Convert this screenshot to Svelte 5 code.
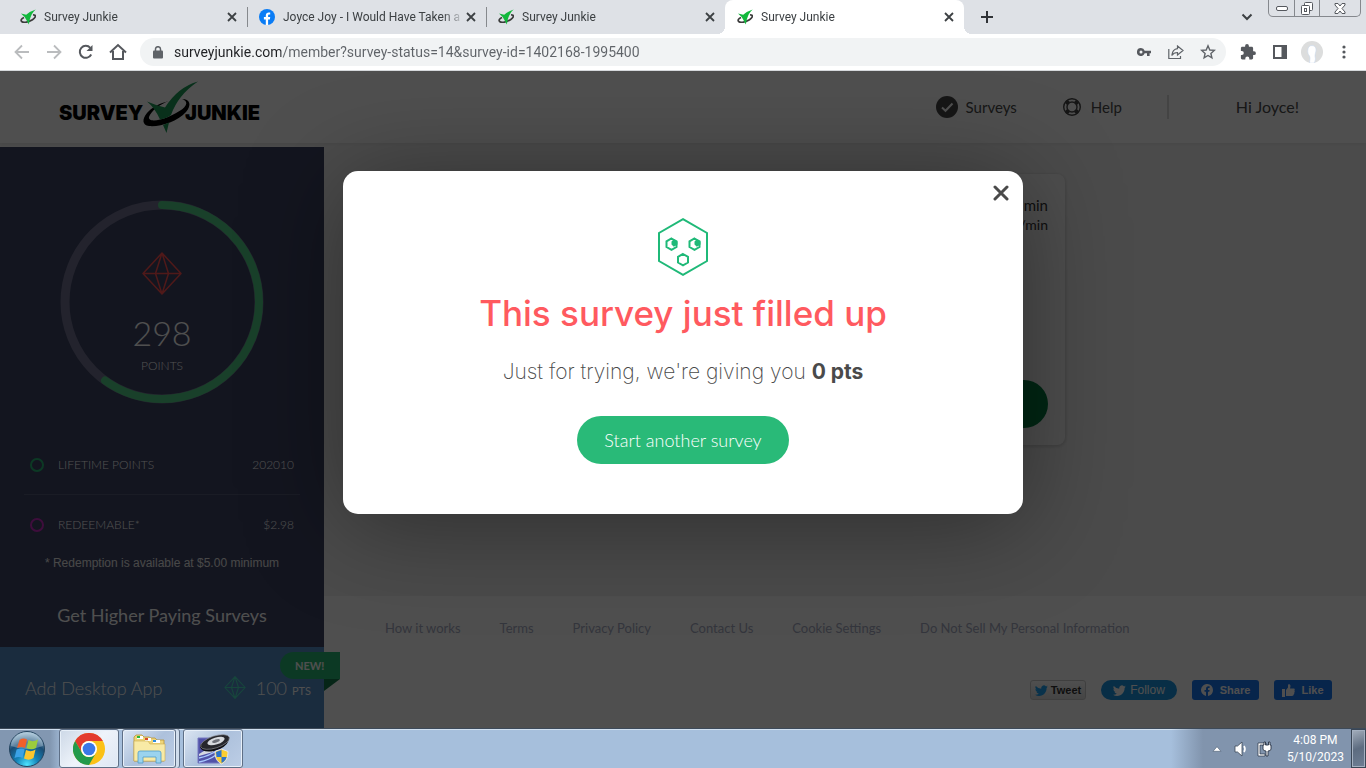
<script lang="ts">
  type Tab = { title: string; icon: 'sj' | 'fb'; active?: boolean };

  const tabs: Tab[] = [
    { title: 'Survey Junkie', icon: 'sj' },
    { title: 'Joyce Joy - I Would Have Taken a', icon: 'fb' },
    { title: 'Survey Junkie', icon: 'sj' },
    { title: 'Survey Junkie', icon: 'sj', active: true }
  ];

  const footerLinks = [
    'How it works',
    'Terms',
    'Privacy Policy',
    'Contact Us',
    'Cookie Settings',
    'Do Not Sell My Personal Information'
  ];

  const stats = [
    { label: 'LIFETIME POINTS', value: '202010', color: '#28b976' },
    { label: 'REDEEMABLE*', value: '$2.98', color: '#c82cc0' }
  ];

  const points = 298;
  const progress = 60;

  let url = $state('surveyjunkie.com/member?survey-status=14&survey-id=1402168-1995400');
  let modalOpen = $state(true);
</script>

{#snippet gem()}
  <svg class="gem" viewBox="0 0 40 43" fill="none" stroke="currentColor" stroke-width="1.5" stroke-linejoin="round">
    <path d="M20 1 39 21.500 20 42 1 21.500Z M1 21.500H39 M20 1 13.500 21.500 20 42 26.500 21.500Z" />
  </svg>
{/snippet}

{#snippet bird()}
  <svg class="bird" viewBox="0 0 24 20" fill="currentColor">
    <path d="M23.600 2.800a9.700 9.700 0 0 1-2.800.8A4.900 4.900 0 0 0 23 .9a9.800 9.800 0 0 1-3.100 1.200 4.900 4.900 0 0 0-8.300 4.500A13.900 13.900 0 0 1 1.500 1.500a4.900 4.900 0 0 0 1.500 6.500A4.900 4.900 0 0 1 .8 7.400a4.900 4.900 0 0 0 3.900 4.900 4.900 4.900 0 0 1-2.200.1 4.900 4.900 0 0 0 4.600 3.400A9.800 9.800 0 0 1 0 17.800 13.900 13.900 0 0 0 7.500 20c9 0 14.200-7.600 13.900-14.700a10 10 0 0 0 2.200-2.500z" />
  </svg>
{/snippet}

<div class="screen">
  <header class="browser">
    <div class="tabstrip">
      {#each tabs as tab}
        <div class="tab" class:active={tab.active}>
          {#if tab.icon === 'fb'}
            <svg class="favicon" viewBox="0 0 16 16">
              <circle cx="8" cy="8" r="8" fill="#0a7cf5" />
              <path d="M6.800 16V10.500H4.900V8.100h1.900V6.500c0-2 1.200-3 2.900-3 .8 0 1.500.1 1.500.1v1.900h-.9c-.9 0-1.200.6-1.200 1.200v1.400h2.100l-.3 2.400H9.100V16z" fill="#fff" />
            </svg>
          {:else}
            <svg class="favicon" viewBox="0 0 16 16">
              <path d="M13 6C16.500 5.600 16 8.500 12.500 10.800 9 13 3.500 14 1.600 12.500 .5 11.300 1.500 9.500 4 8.500" fill="none" stroke="#3b3b3b" stroke-width="1.700" />
              <path d="M1 4.500 6.200 5.800Q9.500 2.500 15.700.5 11.500 4 9.800 10.500L8.800 15.500 7 12Q4.500 7 1 4.500Z" fill="#12b83c" />
            </svg>
          {/if}
          <span class="tab-title">{tab.title}</span>
          <button class="tab-close" aria-label="Close tab">
            <svg width="10" height="10" viewBox="0 0 10 10"><path d="M1 1 9 9M9 1 1 9" stroke="#3c4043" stroke-width="1.800" /></svg>
          </button>
        </div>
      {/each}
      <button class="new-tab" aria-label="New tab">
        <svg width="12" height="12" viewBox="0 0 12 12"><path d="M6 0V12M0 6H12" stroke="#303337" stroke-width="2" /></svg>
      </button>
      <button class="tab-search" aria-label="Search tabs">
        <svg width="12" height="8" viewBox="0 0 12 8"><path d="M1.500 1.500 6 6 10.500 1.500" fill="none" stroke="#3c4043" stroke-width="2" /></svg>
      </button>
      <div class="window-controls">
        <button aria-label="Minimize">
          <svg width="12" height="5" viewBox="0 0 12 5"><rect x=".5" y=".5" width="11" height="4" rx="1.500" fill="#fff" stroke="#55585e" /></svg>
        </button>
        <button aria-label="Restore">
          <svg width="14" height="13" viewBox="0 0 14 13" fill="#fff" stroke="#55585e"><rect x="4.500" y=".5" width="8" height="8" rx="1" /><rect x="1.500" y="3.500" width="8" height="9" rx="1" /><rect x="4.500" y="6.500" width="2" height="3" /></svg>
        </button>
        <button class="win-close" aria-label="Close">
          <svg width="12" height="11" viewBox="0 0 12 11"><path d="M1 .5H4L6 3 8 .5H11V2L8 5.500 11 9V10.500H8L6 8 4 10.500H1V9L4 5.500 1 2Z" fill="#fff" stroke="#55585e" /></svg>
        </button>
      </div>
    </div>

    <div class="toolbar">
      <button class="tool" aria-label="Back">
        <svg width="16" height="16" viewBox="0 0 16 16" fill="none" stroke="#babcbe" stroke-width="1.800"><path d="M15 8H2M8 1.500 1.500 8 8 14.500" /></svg>
      </button>
      <button class="tool" aria-label="Forward">
        <svg width="16" height="16" viewBox="0 0 16 16" fill="none" stroke="#babcbe" stroke-width="1.800"><path d="M1 8H14M8 1.500 14.500 8 8 14.500" /></svg>
      </button>
      <button class="tool" aria-label="Reload">
        <svg width="16" height="16" viewBox="0 0 16 16"><path d="M13.200 10.500A6 6 0 1 1 12.300 3.800" fill="none" stroke="#55585d" stroke-width="2" /><path d="M14.500 1V7H8.500Z" fill="#55585d" /></svg>
      </button>
      <button class="tool" aria-label="Home">
        <svg width="18" height="18" viewBox="0 0 18 18" fill="none" stroke="#55585d" stroke-width="2"><path d="M1 9.500 9 2 17 9.500M4 8V16H14V8" /></svg>
      </button>
      <div class="omnibox">
        <svg class="lock" width="10" height="13" viewBox="0 0 10 13"><rect x="0" y="4.500" width="10" height="8" rx="1" fill="#5f6368" /><path d="M2.500 5V3a2.500 2.300 0 0 1 5 0V5" fill="none" stroke="#5f6368" stroke-width="1.500" /></svg>
        <input class="url" type="text" aria-label="Address" bind:value={url} />
        <button class="tool" aria-label="Passwords">
          <svg width="14" height="8" viewBox="0 0 14 8"><path d="M4 0a4 4 0 1 0 3.700 5.300H10V8h2.600V5.300H14V2.700H7.700A4 4 0 0 0 4 0Zm0 2.500a1.500 1.500 0 1 1 0 3 1.500 1.500 0 0 1 0-3Z" fill="#55585d" fill-rule="evenodd" /></svg>
        </button>
        <button class="tool" aria-label="Share">
          <svg width="16" height="15" viewBox="0 0 16 15" fill="none" stroke="#5f6368" stroke-width="1.200"><path d="M.8 4V13.500H12.500V11M9.500 1 15 5.500 9.500 10V7.500C6.500 7.500 5 8.500 3.800 10.500 4.200 6.500 6 4 9.500 3.600Z" /></svg>
        </button>
        <button class="tool" aria-label="Bookmark">
          <svg width="16" height="16" viewBox="0 0 16 16" fill="none" stroke="#5f6368" stroke-width="1.400"><path d="M8 1.800 9.800 6 14.300 6.400 10.900 9.400 11.900 13.900 8 11.500 4.100 13.900 5.100 9.400 1.700 6.400 6.200 6Z" /></svg>
        </button>
      </div>
      <button class="tool" aria-label="Extensions">
        <svg width="16" height="16" viewBox="0 0 16 16"><path d="M14 7.300h-.9V4.200c0-.8-.6-1.400-1.400-1.400H8.900V2a1.900 1.900 0 1 0-3.800 0v.8H2.300c-.8 0-1.400.6-1.400 1.400V7h.9a2 2 0 0 1 0 4H.9v3c0 .8.600 1.400 1.400 1.400h3v-.8a2 2 0 0 1 4 0v.8h2.400c.8 0 1.400-.6 1.400-1.400v-2.900h.9a1.900 1.900 0 1 0 0-3.800z" fill="#55585d" /></svg>
      </button>
      <button class="tool" aria-label="Side panel">
        <svg width="14" height="14" viewBox="0 0 14 14"><path d="M0 0H14V14H0ZM2 2V12H8.500V2Z" fill="#55585d" fill-rule="evenodd" /></svg>
      </button>
      <button class="tool" aria-label="Profile">
        <svg width="22" height="22" viewBox="0 0 22 22"><circle cx="11" cy="11" r="11" fill="#dcdddd" /><path d="M11 4.500c3 0 4.500 2.500 4 5.500-.3 2-1 3-1 5l.5 3-1 4a11 11 0 0 1-5 0l.5-5-.5-2c-1.500-1.500-2-4-1.700-6C7 6 8.500 4.500 11 4.500Z" fill="#fff" stroke="#c9d8ec" stroke-width=".6" /></svg>
      </button>
      <button class="tool" aria-label="Menu">
        <svg width="4" height="14" viewBox="0 0 4 14" fill="#55585d"><circle cx="2" cy="2" r="1.600" /><circle cx="2" cy="7" r="1.600" /><circle cx="2" cy="12" r="1.600" /></svg>
      </button>
    </div>
  </header>

  <div class="page">
    <div class="site-header">
      <a class="logo" href="#home" aria-label="Survey Junkie">
        <svg width="204" height="56" viewBox="0 0 204 56">
          <g class="logo-text">
            <text x="2" y="41">SURVEY</text>
            <text x="128" y="41">JUNKIE</text>
          </g>
          <path d="M125 20C133 20 135 26 129 33 120 43 103 48 92 47 85 46 85 40 90 34 94 29 103 24 112 22 103 25 94 32 92 38 91 43 101 42 111 38 123 33 131 27 129 23 128 21 127 21 125 20Z" />
          <path d="M90 22.500Q98 26 108 28.500 121 8 141 2.500 121 16 114 36 110 39 103 40.500 98 29 90 22.500ZM106 46 112 43.500 109.500 54Z" fill="#1d9c58" />
        </svg>
      </a>
      <nav class="site-nav">
        <a class="surveys" href="#surveys">
          <svg width="22" height="22" viewBox="0 0 22 22"><circle cx="11" cy="11" r="11" fill="#494949" /><path d="M6 11.500 9.500 14.800 16.500 7.500" fill="none" stroke="#fff" stroke-width="2" /></svg>
          Surveys
        </a>
        <a class="help" href="#help">
          <svg width="18" height="18" viewBox="0 0 18 18" fill="none" stroke="#494949"><circle cx="9" cy="9" r="8.300" stroke-width="1.400" /><circle cx="9" cy="9" r="5" stroke-width="1.400" /><path d="M3 3 5.500 5.500M15 3 12.500 5.500M3 15 5.500 12.500M15 15 12.500 12.500" stroke-width="4" /></svg>
          Help
        </a>
        <span class="greeting">Hi Joyce!</span>
      </nav>
    </div>

    <div class="site-body">
      <aside class="sidebar">
        <div class="ring">
          <svg class="ring-track" viewBox="0 0 204 204" fill="none">
            <circle cx="102" cy="102" r="97" stroke="#717190" stroke-width="9" />
            <circle cx="102" cy="102" r="97" stroke="#53ce87" stroke-width="8" stroke-linecap="round" pathLength="100" stroke-dasharray="{progress} 100" transform="rotate(-90 102 102)" />
          </svg>
          <div class="ring-content">
            {@render gem()}
            <span class="ring-value">{points}</span>
            <span class="ring-label">POINTS</span>
          </div>
        </div>

        <ul class="stats">
          {#each stats as stat}
            <li>
              <span class="dot" style="border-color: {stat.color}"></span>
              <span class="stat-label">{stat.label}</span>
              <span>{stat.value}</span>
            </li>
          {/each}
        </ul>
        <p class="note">* Redemption is available at $5.00 minimum</p>
        <a class="higher" href="#profile">Get Higher Paying Surveys</a>

        <a class="desktop-app" href="#desktop">
          <span class="desktop-title">Add Desktop App</span>
          {@render gem()}
          <span class="desktop-points">100 <small>PTS</small></span>
          <span class="badge">NEW!</span>
        </a>
      </aside>

      <div class="main">
        <div class="content">
          <div class="survey-card">
            <div class="rate">
              <div>min</div>
              <div class="per-minute">/min</div>
            </div>
            <button class="start" aria-label="Start survey"></button>
          </div>
        </div>
        <footer class="site-footer">
          <nav class="footer-links">
            {#each footerLinks as link}
              <a href="#footer">{link}</a>
            {/each}
          </nav>
          <div class="social">
            <button class="tweet">{@render bird()}Tweet</button>
            <button class="follow">{@render bird()}Follow</button>
            <button class="facebook share">
              <svg width="12" height="12" viewBox="0 0 12 12"><path d="M12 6A6 6 0 1 0 5 11.900V7.800H3.500V6H5V4.700C5 3.200 5.900 2.300 7.300 2.300c.6 0 1.300.1 1.300.1v1.500h-.8C7.100 3.900 7 4.300 7 4.800V6h1.600l-.3 1.800H7v4.100A6 6 0 0 0 12 6Z" fill="#fff" /></svg>
              Share
            </button>
            <button class="facebook">
              <svg width="13" height="13" viewBox="0 0 13 13" fill="#fff"><path d="M0 5H3V13H0ZM4 12V6L6 3.500V1C6 0 8.500-.3 8.500 2L8 4.500H11.500C13 4.500 13 6 12.400 6.500 13 7.300 12.700 8.300 12.200 8.600 12.500 9.500 12.200 10 11.600 10.400 11.700 11.600 11 12 10 12Z" /></svg>
              Like
            </button>
          </div>
        </footer>
      </div>
    </div>

    {#if modalOpen}
      <div class="overlay">
        <div class="modal" role="dialog" aria-modal="true" aria-labelledby="modal-title">
          <button class="modal-close" aria-label="Close" onclick={() => (modalOpen = false)}>
            <svg width="16" height="16" viewBox="0 0 16 16"><path d="M2 2 14 14M14 2 2 14" stroke="#4a4a4a" stroke-width="3" stroke-linecap="round" /></svg>
          </button>
          <svg class="face" width="52" height="58" viewBox="0 0 52 58" fill="none" stroke="#1fb978" stroke-width="2">
            <path d="M26 1.200 50 15V43L26 56.800 2 43V15Z" />
            <path d="M14.500 20.500 19.500 23.300V29L14.500 31.800 9.500 29V23.300ZM37.500 20.500 42.500 23.300V29L37.500 31.800 32.500 29V23.300ZM26 36 31 38.800V44.500L26 47.300 21 44.500V38.800Z" />
            <path d="M17 22.500 19.500 24V26L17 27.500 15.500 26V24ZM40 22.500 42.500 24V26L40 27.500 38.500 26V24Z" fill="#1fb978" />
          </svg>
          <h1 id="modal-title">This survey just filled up</h1>
          <p>Just for trying, we're giving you <strong>0 pts</strong></p>
          <button class="another">Start another survey</button>
        </div>
      </div>
    {/if}
  </div>

  <div class="taskbar">
    <button class="start-orb" aria-label="Start">
      <svg width="38" height="38" viewBox="0 0 38 38">
        <defs>
          <radialGradient id="orb" cx=".5" cy=".95" r=".9">
            <stop offset="0" stop-color="#4fe4ff" />
            <stop offset=".35" stop-color="#1483b8" />
            <stop offset=".7" stop-color="#1a4c74" />
            <stop offset="1" stop-color="#8fb3cc" />
          </radialGradient>
        </defs>
        <circle cx="19" cy="19" r="17.500" fill="url(#orb)" stroke="#24445f" />
        <path d="M3 16A16 14 0 0 1 35 16Q19 22 3 16Z" fill="#fff" opacity=".28" />
        <path d="M11.500 10Q15 7.500 19 9.500L17 18Q13.500 16 9 18Z" fill="#f0602a" />
        <path d="M20.500 10Q25 12.500 30 9.500L28 18Q23.500 20.500 18.500 18Z" fill="#9ccc3c" />
        <path d="M8.600 19.500Q13 17.500 16.700 19.500L14.500 28Q11 26 6.500 28Z" fill="#3ba2e6" />
        <path d="M18 20Q23 22.500 27.500 19.500L25.500 28Q21 31 16 28.500Z" fill="#fcc62e" />
      </svg>
    </button>
    <button class="task current" aria-label="Google Chrome">
      <svg width="32" height="32" viewBox="0 0 32 32">
        <circle cx="16" cy="16" r="16" fill="#fbc116" />
        <path d="M2.140 8A16 16 0 0 1 29.860 8H16A8 8 0 0 0 9.070 20Z" fill="#e33b2e" />
        <path d="M2.140 8A16 16 0 0 0 16 32L22.930 20A8 8 0 0 1 9.070 20Z" fill="#229a4b" />
        <circle cx="16" cy="16" r="8" fill="#fff" />
        <circle cx="16" cy="16" r="6.300" fill="#3b78e7" />
      </svg>
    </button>
    <button class="task stacked" aria-label="File Explorer">
      <svg width="34" height="32" viewBox="0 0 34 32">
        <path d="M2 4 4 2H10L12 4H17L19 5H23L25 7H32V28H2Z" fill="#eed57a" stroke="#b8963a" stroke-width=".8" />
        <path d="M5 3H11V6H5ZM13 5H19V8H13ZM21 7H28V10H21Z" fill="#fff" />
        <path d="M5 3H8V5H5Z" fill="#28b83c" />
        <path d="M13 5H16V7H13Z" fill="#d84a2a" />
        <path d="M21 7H24V9H21Z" fill="#2d8ee0" />
        <path d="M2 8H16L18 11H33V28H2Z" fill="#f8eaa6" stroke="#cbac50" stroke-width=".6" />
        <path d="M6 20Q6 18 8 18H27Q29 18 29 20V30H24V24H11V30H6Z" fill="#9bd3ee" stroke="#4f9cc6" stroke-width=".8" />
      </svg>
    </button>
    <button class="task installer" aria-label="Installer">
      <svg width="34" height="32" viewBox="0 0 34 32">
        <path d="M2 5H25V30H2Z" fill="#5152a8" stroke="#7678c0" />
        <path d="M3 25Q13 23 22 17M3 29Q13 27 20 22" fill="none" stroke="#a8c9ff" stroke-width="1.500" />
        <path d="M3 21 13 15 21 13 17 19 3 23Z" fill="#d5d9e2" />
        <path d="M4 11Q6 18 18 15 30 12 33 4L33 7Q30 15 18 18 6 20 4 14Z" fill="#101114" />
        <ellipse cx="19" cy="9" rx="15" ry="6" transform="rotate(-18 19 9)" fill="#26272c" stroke="#8e9096" stroke-width=".6" />
        <ellipse cx="20" cy="8" rx="9" ry="3.500" transform="rotate(-18 20 8)" fill="#d6d9dd" />
        <ellipse cx="20" cy="8" rx="4" ry="1.500" transform="rotate(-18 20 8)" fill="#6d7078" />
        <path d="M19 18.500 25.500 16 32 18.500C32 25 30 28.500 25.500 31 21 28.500 19 25 19 18.500Z" fill="#f9cd32" stroke="#dfe6f0" />
        <path d="M20 19 25.500 17V24H20.600ZM25.500 24H30.600Q29.500 28 25.500 30Z" fill="#2b73cc" />
      </svg>
    </button>
    <div class="tray">
      <svg width="10" height="6" viewBox="0 0 10 6"><path d="M5 .7 9 5.300H1Z" fill="#fff" stroke="#4a5a70" stroke-width=".6" /></svg>
      <svg width="16" height="16" viewBox="0 0 16 16"><path d="M2 5H4.500L9 1V15L4.500 11H2Z" fill="#fff" stroke="#3b4655" stroke-width=".8" /><path d="M11 5Q13 8 11 11" fill="none" stroke="#fff" stroke-width="1.600" /></svg>
      <svg width="16" height="16" viewBox="0 0 16 16"><path d="M1 2H9V4H3V13H8V15H1Z" fill="#fff" stroke="#273243" stroke-width=".7" /><path d="M7 1V4H6V8Q6 10 9 10V15H11V10Q14 10 14 8V4H13V1H11.500V4H8.500V1Z" fill="#fff" stroke="#273243" stroke-width=".9" /></svg>
      <div class="clock">
        <div>4:08 PM</div>
        <div>5/10/2023</div>
      </div>
    </div>
    <button class="show-desktop" aria-label="Show desktop"></button>
  </div>
</div>

<style>
  :global(body) {
    margin: 0;
  }
  .screen {
    display: flex;
    flex-direction: column;
    height: 100vh;
    overflow: hidden;
    font-family: Lato, sans-serif;
  }
  .screen :is(button, input) {
    font-family: inherit;
    border: 0;
    padding: 0;
    background: none;
  }
  .screen a {
    color: inherit;
    text-decoration: none;
  }
  svg {
    display: block;
    flex: none;
  }

  /* browser */
  .browser {
    flex: none;
    font-family: Roboto, 'Noto Sans', sans-serif;
  }
  .tabstrip {
    display: flex;
    height: 34px;
    padding: 0 5px 0 8px;
    background: #dee1e6;
  }
  .tab {
    position: relative;
    display: flex;
    align-items: center;
    flex: 0 1 239px;
    box-sizing: border-box;
    min-width: 0;
    padding: 0 8px 0 12px;
  }
  .tab:nth-child(-n + 2)::after {
    content: '';
    position: absolute;
    right: -1px;
    top: 7px;
    width: 1px;
    height: 20px;
    background: #86898d;
  }
  .tab.active {
    background: #fff;
    border-radius: 8px 8px 0 0;
  }
  .tab.active::before,
  .tab.active::after {
    content: '';
    position: absolute;
    bottom: 0;
    width: 8px;
    height: 8px;
    background: radial-gradient(circle at 0 0, transparent 8px, #fff 8px);
  }
  .tab.active::before {
    left: -8px;
  }
  .tab.active::after {
    right: -8px;
    background: radial-gradient(circle at 100% 0, transparent 8px, #fff 8px);
  }
  .favicon {
    width: 16px;
    height: 16px;
  }
  .tab-title {
    flex: 1;
    min-width: 0;
    margin: 0 2px 0 8px;
    overflow: hidden;
    white-space: nowrap;
    font-size: 12px;
    color: #3c4043;
    mask-image: linear-gradient(90deg, #000 160px, transparent 182px);
  }
  .tab-close {
    display: grid;
    place-items: center;
    width: 14px;
    height: 16px;
  }
  .new-tab {
    display: grid;
    place-items: center;
    width: 46px;
  }
  .tab-search {
    display: grid;
    place-items: center;
    width: 28px;
    margin-left: auto;
  }
  .window-controls {
    display: flex;
    box-sizing: border-box;
    height: 17px;
    margin-left: 7px;
    border: 1px solid #85888d;
    border-top: 0;
    border-radius: 0 0 5px 5px;
  }
  .window-controls button {
    display: grid;
    place-items: center;
    width: 25px;
  }
  .window-controls button + button {
    border-left: 1px solid #85888d;
  }
  .window-controls .win-close {
    width: 41px;
  }
  .toolbar {
    display: flex;
    align-items: center;
    height: 36px;
    padding: 0 6px;
    background: #fff;
    border-bottom: 1px solid #d5d8db;
  }
  .tool {
    display: grid;
    place-items: center;
    flex: none;
    width: 32px;
    height: 28px;
  }
  .omnibox {
    display: flex;
    align-items: center;
    flex: 1;
    height: 28px;
    margin: 0 6px;
    padding: 0 2px 0 13px;
    background: #f1f3f4;
    border-radius: 14px;
  }
  .omnibox .url {
    flex: 1;
    min-width: 0;
    margin-left: 11px;
    font-size: 14px;
    outline: 0;
    /* host is darker than the rest of the address */
    background: linear-gradient(90deg, #202124 107px, #5f6368 107px);
    background-clip: text;
    color: transparent;
  }

  /* page */
  .page {
    position: relative;
    display: flex;
    flex-direction: column;
    flex: 1;
    min-height: 0;
    overflow: hidden;
    background: #f1f1f1;
    color: #4a4a4a;
  }
  .site-header {
    display: flex;
    align-items: center;
    justify-content: space-between;
    height: 72px;
    padding: 0 67px 0 57px;
    background: #fff;
    box-shadow: 0 1px 3px rgba(0, 0, 0, 0.06);
  }
  .logo-text {
    font-family: Inter, sans-serif;
    font-size: 20px;
    font-weight: 900;
  }
  .site-nav,
  .site-nav a {
    display: flex;
    align-items: center;
    gap: 8px;
    font-size: 15px;
  }
  .site-nav .help {
    margin: 0 37px 0 38px;
    gap: 10px;
  }
  .greeting {
    padding-left: 67px;
    border-left: 2px solid #dcdcdc;
    font-size: 16px;
    line-height: 24px;
  }
  .site-body {
    display: flex;
    flex: 1;
    min-height: 0;
  }
  .sidebar {
    display: flex;
    flex-direction: column;
    flex: none;
    width: 324px;
    margin-top: 4px;
    background: #3d4464;
    color: #fff;
  }
  .ring {
    display: grid;
    width: 204px;
    margin: 53px auto 31px;
  }
  .ring > * {
    grid-area: 1 / 1;
  }
  .ring-content {
    display: flex;
    flex-direction: column;
    align-items: center;
    padding-top: 52px;
  }
  .ring-content .gem {
    width: 40px;
    height: 43px;
    color: #ff5050;
  }
  .ring-value {
    margin-top: 16px;
    font-size: 34px;
    font-weight: 300;
    line-height: 44px;
  }
  .ring-label {
    margin-top: 1px;
    font-size: 12px;
    font-weight: 300;
    line-height: 20px;
  }
  .stats {
    margin: 0 24px;
    padding: 0;
    list-style: none;
    font-size: 12px;
    font-weight: 300;
  }
  .stats li {
    display: flex;
    align-items: center;
    height: 59px;
    padding: 0 6px;
  }
  .stats li + li {
    border-top: 1px solid #565a78;
  }
  .dot {
    box-sizing: border-box;
    width: 14px;
    height: 14px;
    border: 2px solid;
    border-radius: 50%;
  }
  .stat-label {
    flex: 1;
    margin-left: 14px;
  }
  .note {
    margin: 1px 0 0;
    font: 12px/16px 'Liberation Sans', Arial, sans-serif;
    text-align: center;
    color: #e8e8e8;
  }
  .higher {
    margin: 32px 0 auto;
    font-size: 18px;
    line-height: 24px;
    text-align: center;
  }
  .desktop-app {
    position: relative;
    display: flex;
    align-items: center;
    box-sizing: border-box;
    height: 81px;
    padding: 0 13px 0 25px;
    background: #548ec8;
    font-size: 18px;
    font-weight: 300;
  }
  .desktop-title {
    flex: 1;
  }
  .desktop-app .gem {
    width: 22px;
    height: 23px;
    margin-right: 10px;
    color: #4ae0c0;
    stroke-width: 2;
  }
  .desktop-app small {
    font-size: 11px;
    font-weight: 400;
  }
  .badge {
    position: absolute;
    top: 5px;
    right: -16px;
    z-index: 1;
    box-sizing: border-box;
    width: 60px;
    padding-left: 15px;
    background: #28b976;
    border-radius: 14px 0 0 14px;
    font-size: 11px;
    font-weight: 700;
    line-height: 27px;
  }
  .badge::after {
    content: '';
    position: absolute;
    top: 27px;
    right: 0;
    border-top: 12px solid #14774a;
    border-right: 16px solid transparent;
  }
  .main {
    display: flex;
    flex-direction: column;
    flex: 1;
    min-width: 0;
  }
  .content {
    flex: 1;
    padding: 31px 301px 0 21px;
  }
  .survey-card {
    display: flex;
    flex-direction: column;
    justify-content: space-between;
    box-sizing: border-box;
    height: 271px;
    padding: 22px 17px 17px;
    background: #fafafa;
    border-radius: 8px;
    box-shadow: 0 1px 3px 1px rgba(0, 0, 0, 0.12);
  }
  .rate {
    font-size: 15px;
    line-height: 19px;
    text-align: right;
    color: #333;
  }
  .per-minute {
    font-size: 14px;
  }
  .survey-card .start {
    width: 100%;
    height: 48px;
    background: #007e42;
    border-radius: 24px;
  }
  .site-footer {
    box-sizing: border-box;
    height: 132px;
    padding: 21px 34px 0 61px;
    background: #fff;
  }
  .footer-links {
    display: flex;
    gap: 39px;
    font-size: 13px;
    line-height: 22px;
    color: #a9adc4;
  }
  .social {
    display: flex;
    justify-content: flex-end;
    gap: 15px;
    margin-top: 41px;
  }
  .social button {
    display: flex;
    align-items: center;
    justify-content: center;
    box-sizing: border-box;
    height: 20px;
    border-radius: 3px;
    font: 700 11px 'Liberation Sans', Arial, sans-serif;
  }
  .bird {
    width: 13px;
    height: 11px;
  }
  .social .tweet {
    gap: 3px;
    width: 56px;
    border: 1px solid #ccc;
    background: linear-gradient(#fff, #dedede);
    color: #333;
  }
  .tweet .bird {
    color: #1da1f2;
  }
  .social .follow {
    gap: 4px;
    width: 76px;
    border-radius: 10px;
    background: #1b95e0;
    color: #fff;
    font-size: 12px;
    font-weight: 400;
  }
  .social .facebook {
    gap: 6px;
    width: 58px;
    background: #1877f2;
    color: #fff;
  }
  .social .share {
    width: 67px;
    gap: 7px;
  }

  /* modal */
  .overlay {
    position: absolute;
    inset: 0;
    z-index: 2;
    display: flex;
    align-items: flex-start;
    justify-content: center;
    background: rgba(0, 0, 0, 0.69);
  }
  .modal {
    position: relative;
    display: flex;
    flex-direction: column;
    align-items: center;
    box-sizing: border-box;
    width: 680px;
    margin-top: 100px;
    padding: 47px 24px 50px;
    background: #fff;
    border-radius: 15px;
    box-shadow: 0 10px 100px rgba(0, 0, 0, 0.4);
    font-family: Inter, sans-serif;
    color: #4a4a4a;
  }
  .modal-close {
    position: absolute;
    top: 14px;
    right: 14px;
  }
  .modal h1 {
    margin: 15px 0 0;
    font-size: 35px;
    font-weight: 500;
    line-height: 44px;
    color: #ff5a5f;
  }
  .modal p {
    margin: 25px 0 0;
    font-size: 21px;
    font-weight: 200;
    line-height: 24px;
  }
  .modal strong {
    font-weight: 700;
  }
  .modal .another {
    margin-top: 32px;
    width: 212px;
    height: 48px;
    border-radius: 24px;
    background: #29ba78;
    color: #fff;
    font: 300 18px Lato, sans-serif;
  }

  /* taskbar */
  .taskbar {
    display: flex;
    flex: none;
    box-sizing: border-box;
    height: 40px;
    border-top: 1px solid #3d4a59;
    background: linear-gradient(90deg, #8297b1 50px, #a6bfdc 64px);
    box-shadow: inset 0 1px #cfdfef;
  }
  .start-orb {
    display: grid;
    place-items: center;
    width: 54px;
    margin-right: 5px;
  }
  .screen .task {
    display: grid;
    place-items: center;
    box-sizing: border-box;
    width: 60px;
    margin-right: 3px;
    background: linear-gradient(135deg, #dde7f3, #adc1dc 50%, #bdcee6);
    box-shadow: inset 0 0 0 1px #5e6f86, inset 0 0 0 2px #e8f0f9;
    border-radius: 3px;
  }
  .screen .current {
    background: linear-gradient(135deg, #cbd7e6, #eef3fa 50%, #dde6f3);
  }
  .screen .stacked {
    width: 54px;
    margin-right: 7px;
    box-shadow: inset 0 0 0 1px #5e6f86, inset 0 0 0 2px #e8f0f9, 3px 0 #d0ddec, 4px 0 #5e6f86;
  }
  .tray {
    display: flex;
    align-items: center;
    gap: 8px;
    margin-left: auto;
    padding: 1px 7px 0 41px;
    background: linear-gradient(90deg, transparent, #8194ad 32px);
  }
  .tray svg:first-child {
    margin-right: 3px;
  }
  .clock {
    margin-left: 6px;
    font: 12px/17px Roboto, 'Noto Sans', sans-serif;
    text-align: center;
    color: #fff;
  }
  .screen .show-desktop {
    width: 15px;
    background: linear-gradient(160deg, #a9b3c0, #5d6c80 50%, #6f7f95);
    box-shadow: inset 0 0 0 1px #3a4655, inset 0 0 0 2px #a4b0c0;
  }
</style>
